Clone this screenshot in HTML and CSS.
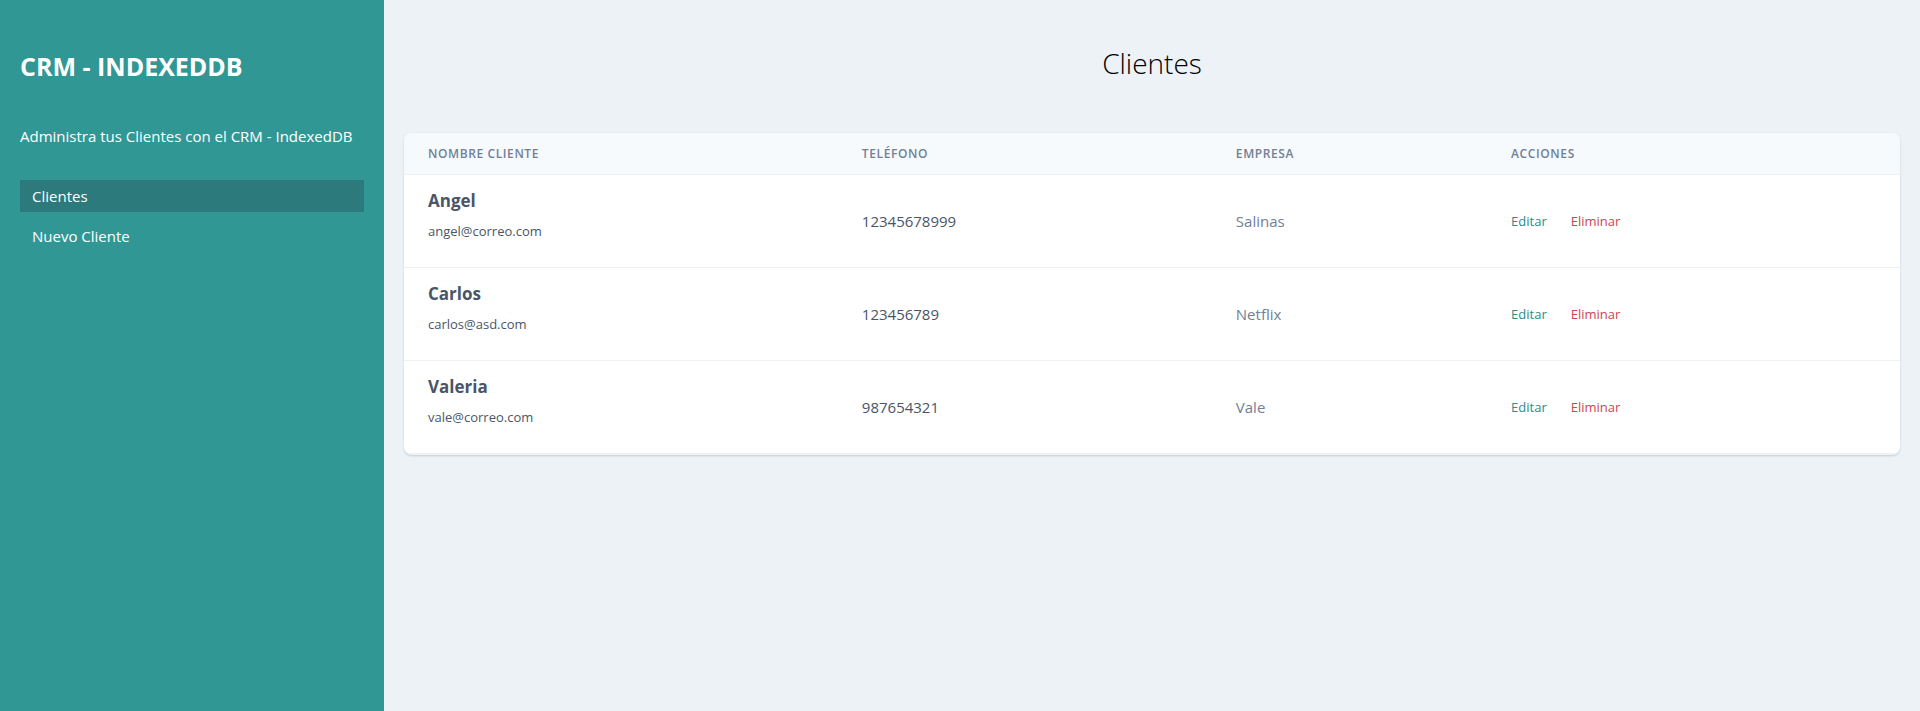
FILE: index.html
```html
<!DOCTYPE html>
<html lang="es">
<head>
<meta charset="utf-8">
<meta name="viewport" content="width=device-width, initial-scale=1">
<title>CRM - IndexedDB</title>
<link rel="stylesheet" href="styles.css">
</head>
<body>
<div class="layout">
  <aside class="sidebar">
    <h2 class="brand">CRM - INDEXEDDB</h2>
    <p class="intro">Administra tus Clientes con el CRM - IndexedDB</p>
    <nav class="nav">
      <a class="nav-link active" href="#clientes">Clientes</a>
      <a class="nav-link" href="#nuevo">Nuevo Cliente</a>
    </nav>
  </aside>
  <main class="content" id="clientes">
    <h1 class="title">Clientes</h1>
    <div class="card">
      <table class="clients">
        <colgroup><col class="col-name"><col class="col-phone"><col class="col-company"><col></colgroup>
        <thead>
          <tr><th scope="col">Nombre Cliente</th><th scope="col">Teléfono</th><th scope="col">Empresa</th><th scope="col">Acciones</th></tr>
        </thead>
        <tbody>
          <tr>
            <td><p class="name">Angel</p><p class="email">angel@correo.com</p></td>
            <td class="phone">12345678999</td>
            <td class="company">Salinas</td>
            <td class="actions"><a class="edit" href="#editar">Editar</a><a class="delete" href="#eliminar">Eliminar</a></td>
          </tr>
          <tr>
            <td><p class="name">Carlos</p><p class="email">carlos@asd.com</p></td>
            <td class="phone">123456789</td>
            <td class="company">Netflix</td>
            <td class="actions"><a class="edit" href="#editar">Editar</a><a class="delete" href="#eliminar">Eliminar</a></td>
          </tr>
          <tr>
            <td><p class="name">Valeria</p><p class="email">vale@correo.com</p></td>
            <td class="phone">987654321</td>
            <td class="company">Vale</td>
            <td class="actions"><a class="edit" href="#editar">Editar</a><a class="delete" href="#eliminar">Eliminar</a></td>
          </tr>
        </tbody>
      </table>
    </div>
  </main>
</div>
</body>
</html>
```

FILE: styles.css
```css
*, *::before, *::after { box-sizing: border-box; }
body {
  margin: 0;
  background: #edf2f7;
  color: #000;
  font-family: "Segoe UI", "Open Sans", "Noto Sans", sans-serif;
  font-size: 15px;
  line-height: 24px;
}
h1, h2, p { margin: 0; }
a { color: inherit; text-decoration: none; }
.layout { display: flex; min-height: 100vh; }
.sidebar {
  width: 20%;
  padding: 48px 20px;
  background: #319795;
  color: #fff;
}
.brand { font-size: 25px; line-height: 36px; font-weight: 700; }
.intro { margin-top: 40px; }
.nav { margin-top: 32px; display: flex; flex-direction: column; gap: 8px; }
.nav-link { padding: 4px 12px; }
.nav-link.active { background: #2c7a7b; }
.content { flex: 1; padding: 44px 20px; }
.title { font-size: 28px; line-height: 38px; font-weight: 300; text-align: center; }
.card {
  margin-top: 51px;
  overflow: hidden;
  background: #fff;
  border-bottom: 1px solid #edf2f7;
  border-radius: 8px;
  box-shadow: 0 1px 3px rgba(0,0,0,.1), 0 1px 2px rgba(0,0,0,.06);
}
.clients { width: 100%; border-collapse: separate; border-spacing: 0; table-layout: fixed; }
.col-name { width: 29%; }
.col-phone { width: 25%; }
.col-company { width: 18.4%; }
th {
  padding: 13px 24px 12px;
  background: #f7fafc;
  border-bottom: 1px solid #edf2f7;
  color: #718096;
  font-size: 12px;
  line-height: 16px;
  font-weight: 600;
  letter-spacing: .05em;
  text-align: left;
  text-transform: uppercase;
}
td { padding: 16px 24px; border-bottom: 1px solid #edf2f7; }
.name { color: #4a5568; font-size: 17px; line-height: 20px; font-weight: 700; }
.email { margin: 10px 0; color: #4a5568; font-size: 13px; line-height: 20px; }
.phone { color: #4a5568; }
.company { color: #718096; }
.actions { font-size: 13px; line-height: 20px; }
.edit { margin-right: 24px; color: #2c8c87; }
.delete { color: #d04452; }
```
